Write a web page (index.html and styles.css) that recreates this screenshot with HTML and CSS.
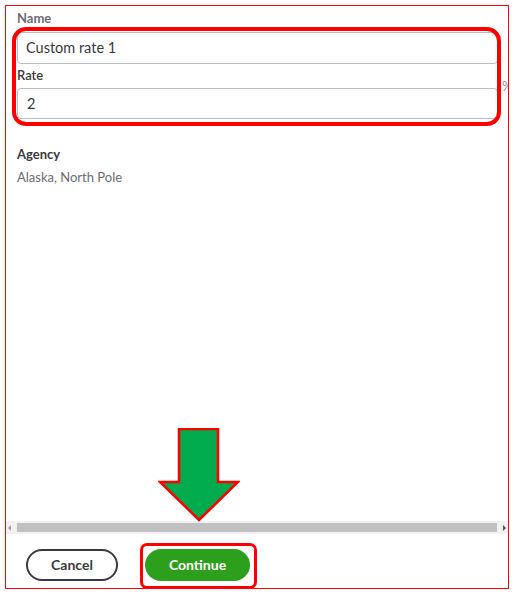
FILE: index.html
```html
<!DOCTYPE html>
<html>
<head>
<meta charset="utf-8">
<link rel="stylesheet" href="styles.css">
</head>
<body>
<div class="frame">
  <div class="content">
    <div class="label label-muted">Name</div>
    <div class="field-row">
      <div class="input">Custom rate 1</div>
    </div>
    <div class="label label-rate">Rate</div>
    <div class="field-row">
      <div class="input input-rate">2</div>
      <span class="pct">%</span>
    </div>
    <div class="agency">
      <div class="label label-strong">Agency</div>
      <div class="agency-value">Alaska, North Pole</div>
    </div>
  </div>
  <div class="hscroll">
    <span class="arrow-left"></span>
    <div class="thumb"></div>
    <span class="arrow-right"></span>
  </div>
  <div class="footer">
    <button class="btn btn-cancel">Cancel</button>
    <button class="btn btn-continue">Continue</button>
  </div>

  <div class="mark mark-fields"></div>
  <div class="mark mark-continue"></div>
  <svg class="big-arrow" width="82" height="94" viewBox="0 0 82 94">
    <polygon points="21,1 60,1 60,54 80,54 41,92 2,54 21,54" fill="#00ac4e" stroke="#ff0000" stroke-width="2.5" stroke-linejoin="miter"/>
  </svg>
</div>
</body>
</html>
```
FILE: styles.css
```css
* { box-sizing: border-box; }
html, body { margin: 0; padding: 0; background: #fff; }
body { font-family: Lato, "Open Sans", sans-serif; color: #393a3d; }

.frame {
  position: relative;
  margin: 5px 0 0 5px;
  width: 504px;
  height: 584px;
  border: 1px solid #ff0000;
  display: flex;
  flex-direction: column;
  overflow: hidden;
}

.content {
  flex: 1;
  padding: 4px 0 0 11px;
}

.label {
  font-size: 13px;
  line-height: 16px;
  font-weight: 700;
}
.label-muted { color: #6b6c72; }
.label-rate { margin-top: 3px; color: #393a3d; font-weight: 600; }
.label-strong { color: #393a3d; }

.field-row {
  display: flex;
  align-items: flex-start;
  margin-top: 6px;
}
.label-rate + .field-row { margin-top: 5px; }

.input {
  flex-shrink: 0;
  width: 481px;
  height: 32px;
  border: 1px solid #babec5;
  border-radius: 4px;
  padding: 0 0 0 8px;
  font-size: 14.5px;
  line-height: 30px;
  color: #393a3d;
}
.input-rate { height: 31px; line-height: 29px; padding-left: 9px; }

.pct {
  flex-shrink: 0;
  margin: -10px 0 0 4px;
  font-size: 13px;
  color: #8d9096;
}

.agency { margin-top: 27px; }
.agency-value {
  margin-top: 7px;
  font-size: 13px;
  line-height: 16px;
  color: #6b6c72;
}

.hscroll {
  height: 13px;
  background: #f1f1f3;
  display: flex;
  align-items: center;
  padding: 0 2px;
}
.thumb {
  flex: 1;
  height: 9px;
  background: #c1c1c1;
  margin: 0 6px;
}
.arrow-left, .arrow-right {
  width: 0; height: 0;
  border-top: 3px solid transparent;
  border-bottom: 3px solid transparent;
}
.arrow-left { border-right: 3px solid #a3a3a3; }
.arrow-right { border-left: 3px solid #505050; }

.footer {
  height: 54px;
  display: flex;
  align-items: flex-start;
  padding: 15px 0 0 20px;
  gap: 27px;
}
.btn {
  height: 32px;
  border-radius: 16px;
  font-family: Lato, "Open Sans", sans-serif;
  font-size: 14px;
  font-weight: 700;
  line-height: 28px;
  padding: 0;
  cursor: pointer;
}
.btn-cancel {
  width: 92px;
  background: #fff;
  border: 2px solid #393a3d;
  color: #393a3d;
}
.btn-continue {
  width: 105px;
  background: #2ca01c;
  border: none;
  color: #fff;
}

.mark {
  position: absolute;
  border: 4px solid #ff0000;
}
.mark-fields {
  left: 6px;
  top: 21px;
  width: 489px;
  height: 99px;
  border-radius: 14px;
}
.mark-continue {
  left: 134px;
  top: 537px;
  width: 117px;
  height: 46px;
  border-width: 3px;
  border-radius: 7px;
}
.big-arrow {
  position: absolute;
  left: 152px;
  top: 422px;
}
```
